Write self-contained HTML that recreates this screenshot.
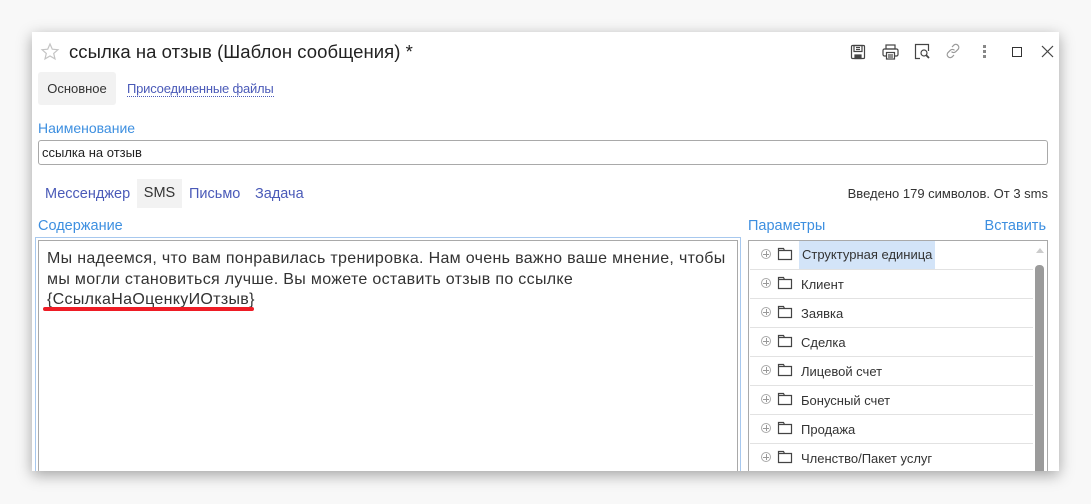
<!DOCTYPE html>
<html><head><meta charset="utf-8"><style>
*{box-sizing:border-box;margin:0;padding:0}
body{width:1091px;height:504px;background:#f8f8f8;position:relative;overflow:hidden;font-family:"Liberation Sans",Arial,sans-serif;color:#333}
.win{position:absolute;left:32px;top:32px;width:1027px;height:439px;background:#fff;box-shadow:0 4px 14px rgba(0,0,0,.35);overflow:hidden}
.a{position:absolute;white-space:nowrap}
.blue{color:#3d8fe0}
.lnk{color:#4a5ab8}
.row{position:absolute;left:1px;width:283px;height:29px;border-bottom:1px solid #e2e2e2;font-size:13px}
.row .pl{position:absolute;left:11px;top:8px;width:10px;height:10px;border:1px solid #aaa;border-radius:50%}
.row .pl:before{content:"";position:absolute;left:4px;top:1px;width:1px;height:6px;background:#999}
.row .pl:after{content:"";position:absolute;left:1px;top:4px;width:6px;height:1px;background:#999}
.row svg{position:absolute;left:27px;top:6px}
.row span{position:absolute;left:51px;top:7px;color:#333}
</style></head><body>
<div class="win">
<svg class="a" style="left:8px;top:10px" width="20" height="20" viewBox="0 0 20 20"><path d="M10 2l2.3 5.2 5.6.5-4.2 3.7 1.3 5.5L10 14l-5 2.9 1.3-5.5L2.1 7.7l5.6-.5z" fill="none" stroke="#c4c4c4" stroke-width="1.2"/></svg>
<div class="a" style="left:37px;top:9px;font-size:18.5px;color:#222;letter-spacing:0.05px">ссылка на отзыв (Шаблон сообщения) *</div>
<svg class="a" style="left:818px;top:12px" width="16" height="16" viewBox="0 0 16 16" fill="none" stroke="#444" stroke-width="1.2"><rect x="1.5" y="1.5" width="13" height="13" rx="1"/><rect x="4" y="1.5" width="8" height="6"/><line x1="6" y1="3.5" x2="10" y2="3.5"/><line x1="6" y1="5.5" x2="10" y2="5.5"/><rect x="5" y="11" width="6" height="3.5" fill="#444"/></svg>
<svg class="a" style="left:850px;top:12px" width="17" height="16" viewBox="0 0 17 16" fill="none" stroke="#444" stroke-width="1.2"><rect x="4" y="1" width="9" height="4"/><rect x="1" y="5" width="15" height="7" rx="1.5"/><rect x="4.5" y="8.5" width="8" height="6.5" fill="#fff"/><line x1="6" y1="11" x2="11" y2="11"/><line x1="6" y1="13" x2="11" y2="13"/></svg>
<svg class="a" style="left:882px;top:11px" width="17" height="17" viewBox="0 0 17 17" fill="none" stroke="#444" stroke-width="1.2"><path d="M6 15.5H1.5v-14h13V8"/><circle cx="10" cy="10" r="3"/><line x1="12" y1="12" x2="15" y2="15" stroke-width="1.8"/></svg>
<svg class="a" style="left:913px;top:11px" width="16" height="16" viewBox="0 0 16 16" fill="none" stroke="#999" stroke-width="1.2"><path d="M7 4l2-2a3 3 0 0 1 4.2 4.2l-2.5 2.5a3 3 0 0 1-4.2 0"/><path d="M9 12l-2 2a3 3 0 0 1-4.2-4.2l2.5-2.5a3 3 0 0 1 4.2 0"/></svg>
<div class="a" style="left:951px;top:13px;width:4px"><div style="width:3px;height:3px;background:#888;margin-bottom:2px"></div><div style="width:3px;height:3px;background:#888;margin-bottom:2px"></div><div style="width:3px;height:3px;background:#888"></div></div>
<div class="a" style="left:980px;top:15px;width:10px;height:10px;border:1.3px solid #333"></div>
<svg class="a" style="left:1009px;top:13px" width="13" height="13" viewBox="0 0 13 13" stroke="#444" stroke-width="1.2"><line x1="1" y1="1" x2="12" y2="12"/><line x1="12" y1="1" x2="1" y2="12"/></svg>

<div class="a" style="left:6px;top:40px;width:78px;height:33px;background:#f2f2f2;border-radius:3px;font-size:13px;line-height:33px;text-align:center;color:#333">Основное</div>
<div class="a lnk" style="left:95px;top:50px;font-size:13px;border-bottom:1px dotted #4a5ab8;line-height:14px;letter-spacing:-0.2px">Присоединенные файлы</div>

<div class="a blue" style="left:6px;top:88px;font-size:14px">Наименование</div>
<div class="a" style="left:6px;top:108px;width:1010px;height:25px;border:1px solid #a9a9a9;border-radius:3px;font-size:13px;padding:4px 3px;color:#222">ссылка на отзыв</div>

<div class="a lnk" style="left:13px;top:154px;font-size:14.5px">Мессенджер</div>
<div class="a" style="left:105px;top:147px;width:45px;height:29px;background:#f2f2f2;font-size:14.5px;line-height:29px;text-align:center;color:#333">SMS</div>
<div class="a lnk" style="left:157px;top:154px;font-size:14.5px">Письмо</div>
<div class="a lnk" style="left:223px;top:154px;font-size:14.5px">Задача</div>
<div class="a" style="right:11px;top:154px;font-size:13px;color:#333">Введено 179 символов. От 3 sms</div>

<div class="a blue" style="left:6px;top:186px;font-size:14.5px">Содержание</div>
<div class="a" style="left:3px;top:205px;width:706px;height:240px;border:1px solid #a7c8ee"></div>
<div class="a" style="left:6px;top:208px;width:700px;height:240px;border:1px solid #a9a9a9;padding:8px 4px 8px 8px;font-size:16px;line-height:20.5px;color:#333;white-space:normal;letter-spacing:0.32px">Мы надеемся, что вам понравилась тренировка. Нам очень важно ваше мнение, чтобы мы могли становиться лучше. Вы можете оставить отзыв по ссылке {СсылкаНаОценкуИОтзыв}</div>
<div class="a" style="left:11px;top:275px;width:211px;height:4px;background:#ee1c25;border-radius:2px"></div>

<div class="a blue" style="left:716px;top:186px;font-size:14.5px">Параметры</div>
<div class="a blue" style="right:13px;top:186px;font-size:14.5px">Вставить</div>
<div class="a" style="left:716px;top:208px;width:300px;height:240px;border:1px solid #a9a9a9">
 <div class="row" style="top:0"><div class="pl"></div><svg width="16" height="14" viewBox="0 0 16 14" fill="none" stroke="#444" stroke-width="1.2"><path d="M1.5 3.5h13v9h-13zM1.5 3.5V1.5h5l1 2"/></svg><span style="left:49px;top:0;background:#d3e4f8;padding:6px 3px;height:28px">Структурная единица</span></div>
 <div class="row" style="top:29px"><div class="pl"></div><svg width="16" height="14" viewBox="0 0 16 14" fill="none" stroke="#444" stroke-width="1.2"><path d="M1.5 3.5h13v9h-13zM1.5 3.5V1.5h5l1 2"/></svg><span>Клиент</span></div>
 <div class="row" style="top:58px"><div class="pl"></div><svg width="16" height="14" viewBox="0 0 16 14" fill="none" stroke="#444" stroke-width="1.2"><path d="M1.5 3.5h13v9h-13zM1.5 3.5V1.5h5l1 2"/></svg><span>Заявка</span></div>
 <div class="row" style="top:87px"><div class="pl"></div><svg width="16" height="14" viewBox="0 0 16 14" fill="none" stroke="#444" stroke-width="1.2"><path d="M1.5 3.5h13v9h-13zM1.5 3.5V1.5h5l1 2"/></svg><span>Сделка</span></div>
 <div class="row" style="top:116px"><div class="pl"></div><svg width="16" height="14" viewBox="0 0 16 14" fill="none" stroke="#444" stroke-width="1.2"><path d="M1.5 3.5h13v9h-13zM1.5 3.5V1.5h5l1 2"/></svg><span>Лицевой счет</span></div>
 <div class="row" style="top:145px"><div class="pl"></div><svg width="16" height="14" viewBox="0 0 16 14" fill="none" stroke="#444" stroke-width="1.2"><path d="M1.5 3.5h13v9h-13zM1.5 3.5V1.5h5l1 2"/></svg><span>Бонусный счет</span></div>
 <div class="row" style="top:174px"><div class="pl"></div><svg width="16" height="14" viewBox="0 0 16 14" fill="none" stroke="#444" stroke-width="1.2"><path d="M1.5 3.5h13v9h-13zM1.5 3.5V1.5h5l1 2"/></svg><span>Продажа</span></div>
 <div class="row" style="top:203px"><div class="pl"></div><svg width="16" height="14" viewBox="0 0 16 14" fill="none" stroke="#444" stroke-width="1.2"><path d="M1.5 3.5h13v9h-13zM1.5 3.5V1.5h5l1 2"/></svg><span>Членство/Пакет услуг</span></div>
 <div class="a" style="left:287px;top:7px;width:0;height:0;border-left:4px solid transparent;border-right:4px solid transparent;border-bottom:5px solid #ccc"></div>
 <div class="a" style="left:286px;top:24px;width:9px;height:220px;background:#9b9b9b;border-radius:4px 4px 0 0"></div>
</div>
</div>
</body></html>
